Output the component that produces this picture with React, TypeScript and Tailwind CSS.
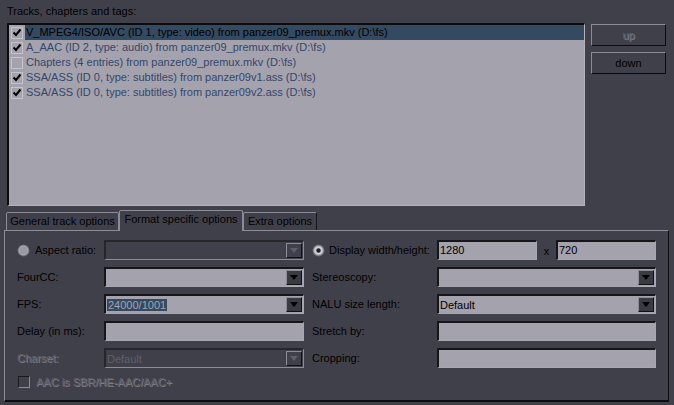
import React from 'react';

// MKVToolnix-style dark theme: track list + format specific options tab

const tracks = [
  { label: 'V_MPEG4/ISO/AVC (ID 1, type: video) from panzer09_premux.mkv (D:\\fs)', checked: true, selected: true },
  { label: 'A_AAC (ID 2, type: audio) from panzer09_premux.mkv (D:\\fs)', checked: true },
  { label: 'Chapters (4 entries) from panzer09_premux.mkv (D:\\fs)', checked: false },
  { label: 'SSA/ASS (ID 0, type: subtitles) from panzer09v1.ass (D:\\fs)', checked: true },
  { label: 'SSA/ASS (ID 0, type: subtitles) from panzer09v2.ass (D:\\fs)', checked: true },
];

const disabledText = 'text-[#5f5f69] [text-shadow:1px_1px_0_#7d7d86]';

const CheckMark = () => (
  <svg width="10" height="10" viewBox="0 0 10 10" className="block">
    <path d="M1.5 4.5 L4 7 L8.5 1.5" fill="none" stroke="#000" strokeWidth="2" />
  </svg>
);

const ListCheck: React.FC<{ checked: boolean }> = ({ checked }) => (
  <div className="w-[12px] h-[12px] border border-[#c4c3cc] flex items-center justify-center shrink-0">
    {checked && <CheckMark />}
  </div>
);

const Radio: React.FC<{ checked?: boolean }> = ({ checked }) => (
  <svg width="13" height="13" viewBox="0 0 13 13" className="block shrink-0">
    <circle cx="6.5" cy="6.5" r="6" fill="#6c6c76" />
    <circle cx="6.5" cy="6.5" r="5" fill="#a9a8b2" />
    <circle cx="6.5" cy="6.5" r="4" fill={checked ? '#cfcfd6' : '#9b9aa4'} />
    {checked && <circle cx="6.5" cy="6.5" r="2.2" fill="#202024" />}
  </svg>
);

const Arrow: React.FC<{ disabled?: boolean }> = ({ disabled }) => (
  <div
    className={`w-[16px] self-stretch my-[1px] mr-[1px] flex items-center justify-center border border-t-[#8c8c96] border-l-[#8c8c96] border-r-[#111] border-b-[#111] ${
      disabled ? 'bg-[#40404a]' : 'bg-[#3a3a43]'
    }`}
  >
    <svg width="8" height="5" viewBox="0 0 8 5" className="block">
      <path d="M0 0 H8 L4 5 Z" fill={disabled ? '#5f5f69' : '#000'} />
    </svg>
  </div>
);

const Combo: React.FC<{ width: string; value?: string; disabled?: boolean; highlight?: boolean }> = ({
  width,
  value,
  disabled,
  highlight,
}) => (
  <div
    className={`${width} shrink-0 h-[20px] flex items-center border-t-2 border-l-2 border-r border-b ${
      disabled
        ? 'bg-[#40404a] border-t-[#26262c] border-l-[#26262c] border-r-[#8c8c96] border-b-[#8c8c96]'
        : 'bg-[#a4a2ad] border-t-[#16161a] border-l-[#16161a] border-r-[#a9a8b2] border-b-[#a9a8b2]'
    }`}
  >
    <div className="flex-1 pl-[1px] leading-[16px] whitespace-nowrap overflow-hidden">
      {value &&
        (highlight ? (
          <span className="bg-[#344a61] text-[#a4a2ad] px-[1px]">{value}</span>
        ) : (
          <span className={disabled ? 'text-[#5f5f69]' : 'text-black'}>{value}</span>
        ))}
    </div>
    <Arrow disabled={disabled} />
  </div>
);

const Input: React.FC<{ width: string; value?: string }> = ({ width, value }) => (
  <div
    className={`${width} shrink-0 h-[20px] bg-[#a4a2ad] pl-[1px] leading-[16px] text-black border-t-2 border-l-2 border-r border-b border-t-[#16161a] border-l-[#16161a] border-r-[#a9a8b2] border-b-[#a9a8b2]`}
  >
    {value}
  </div>
);

const Button: React.FC<{ children: React.ReactNode; disabled?: boolean }> = ({ children, disabled }) => (
  <div
    className={`w-[75px] h-[22px] flex items-center justify-center border border-t-[#8c8c96] border-l-[#8c8c96] border-r-[#0c0c0e] border-b-[#0c0c0e] ${
      disabled ? disabledText : 'text-black'
    }`}
  >
    {children}
  </div>
);

const Row: React.FC<{ children: React.ReactNode }> = ({ children }) => (
  <div className="h-[20px] flex items-center whitespace-nowrap">{children}</div>
);

const LeftLabel: React.FC<{ children: React.ReactNode; className?: string }> = ({ children, className = '' }) => (
  <div className={`w-[87px] shrink-0 flex items-center gap-[5px] ${className}`}>{children}</div>
);

const RightLabel: React.FC<{ children: React.ReactNode }> = ({ children }) => (
  <div className="w-[133px] shrink-0 pl-[8px] flex items-center gap-[4px]">{children}</div>
);

export default function App() {
  return (
    <div className="w-[674px] h-[405px] bg-[#40404a] text-[11px] text-black overflow-hidden font-['Liberation_Sans',Arial,sans-serif]">
      <div className="flex pl-[7px] pt-[4px]">
        <div className="w-[578px] flex flex-col">
          <div className="h-[19px] leading-[14px]">Tracks, chapters and tags:</div>
          <div className="h-[183px] bg-[#a4a2ad] border-t-2 border-l-2 border-r border-b border-t-[#0c0c0e] border-l-[#0c0c0e] border-r-[#b4b3bc] border-b-[#b4b3bc]">
            {tracks.map((t) => (
              <div key={t.label} className="h-[15px] flex items-center">
                <div className="w-[16px] flex items-center justify-center">
                  <ListCheck checked={t.checked} />
                </div>
                <div
                  className={`flex-1 h-[15px] pl-[1px] leading-[15px] whitespace-nowrap ${
                    t.selected ? 'bg-[#344a61] text-black' : 'text-[#34476a]'
                  }`}
                >
                  {t.label}
                </div>
              </div>
            ))}
          </div>
        </div>
        <div className="ml-[6px] pt-[20px] flex flex-col gap-[6px]">
          <Button disabled>up</Button>
          <Button>down</Button>
        </div>
      </div>

      <div className="flex items-end pl-[6px] mt-[4px] h-[20px] whitespace-nowrap">
        <div className="w-[113px] h-[18px] text-center leading-[16px] border border-b-0 border-t-[#8c8c96] border-l-[#8c8c96] border-r-[#8c8c96] rounded-t-[2px]">
          General track options
        </div>
        <div className="w-[124px] h-[21px] -mb-[1px] text-center leading-[17px] border border-b-0 border-[#8c8c96] rounded-t-[2px] bg-[#40404a] relative z-10">
          Format specific options
        </div>
        <div className="w-[74px] h-[18px] text-center leading-[16px] border border-b-0 border-t-[#8c8c96] border-l-[#8c8c96] border-r-[#16161a] rounded-t-[2px]">
          Extra options
        </div>
      </div>

      <div className="ml-[4px] w-[665px] h-[172px] border border-t-[#8c8c96] border-l-[#8c8c96] border-r-[#0c0c0e] border-b-[#0c0c0e] border-b-2 pl-[12px] pt-[9px] flex flex-col gap-[7px]">
        <Row>
          <LeftLabel>
            <Radio />
            <span>Aspect ratio:</span>
          </LeftLabel>
          <Combo width="w-[200px]" disabled />
          <RightLabel>
            <Radio checked />
            <span>Display width/height:</span>
          </RightLabel>
          <Input width="w-[100px]" value="1280" />
          <span className="w-[19px] shrink-0 text-center pt-[3px]">x</span>
          <Input width="w-[100px]" value="720" />
        </Row>
        <Row>
          <LeftLabel>FourCC:</LeftLabel>
          <Combo width="w-[200px]" />
          <RightLabel>Stereoscopy:</RightLabel>
          <Combo width="w-[219px]" />
        </Row>
        <Row>
          <LeftLabel>FPS:</LeftLabel>
          <Combo width="w-[200px]" value="24000/1001" highlight />
          <RightLabel>NALU size length:</RightLabel>
          <Combo width="w-[219px]" value="Default" />
        </Row>
        <Row>
          <LeftLabel>Delay (in ms):</LeftLabel>
          <Input width="w-[200px]" />
          <RightLabel>Stretch by:</RightLabel>
          <Input width="w-[219px]" />
        </Row>
        <Row>
          <LeftLabel className={disabledText}>Charset:</LeftLabel>
          <Combo width="w-[200px]" value="Default" disabled />
          <RightLabel>Cropping:</RightLabel>
          <Input width="w-[219px]" />
        </Row>
        <div className="h-[14px] flex items-center gap-[6px] pl-[1px]">
          <div className="w-[12px] h-[12px] border border-t-[#1a1a1e] border-l-[#1a1a1e] border-r-[#8c8c96] border-b-[#8c8c96]" />
          <span className={disabledText}>AAC is SBR/HE-AAC/AAC+</span>
        </div>
      </div>
    </div>
  );
}
